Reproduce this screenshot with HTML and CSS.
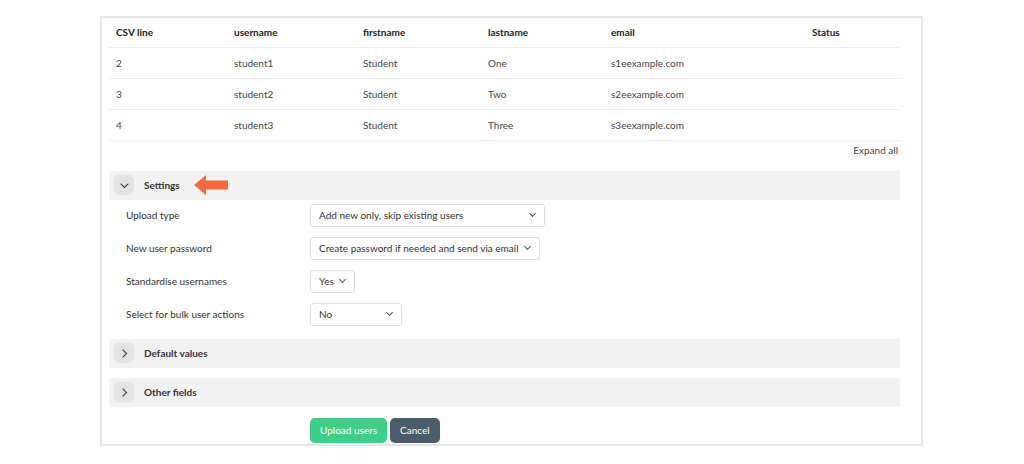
FILE: index.html
```html
<!DOCTYPE html>
<html lang="en">

<head>
  <meta charset="UTF-8">
  <title>Upload users - Preview</title>
  <meta name="viewport" content="width=device-width, initial-scale=1.0">
  <link rel="stylesheet" href="styles.css">
</head>

<body>

  <div class="frame">
    <table class="preview-table">
      <colgroup>
        <col style="width: 118px">
        <col style="width: 129px">
        <col style="width: 125px">
        <col style="width: 123px">
        <col style="width: 201px">
        <col>
      </colgroup>
      <thead>
        <tr>
          <th>CSV line</th>
          <th>username</th>
          <th>firstname</th>
          <th>lastname</th>
          <th>email</th>
          <th>Status</th>
        </tr>
      </thead>
      <tbody>
        <tr>
          <td>2</td>
          <td>student1</td>
          <td>Student</td>
          <td>One</td>
          <td>s1eexample.com</td>
          <td></td>
        </tr>
        <tr>
          <td>3</td>
          <td>student2</td>
          <td>Student</td>
          <td>Two</td>
          <td>s2eexample.com</td>
          <td></td>
        </tr>
        <tr>
          <td>4</td>
          <td>student3</td>
          <td>Student</td>
          <td>Three</td>
          <td>s3eexample.com</td>
          <td></td>
        </tr>
      </tbody>
    </table>

    <div class="expand-row"><a href="#">Expand all</a></div>

    <div class="section">
      <div class="section-head">
        <span class="toggle">
          <svg width="11" height="11" viewBox="0 0 10 10"><path d="M1.5 3.2 L5 6.7 L8.5 3.2" fill="none" stroke="#3a3a3a" stroke-width="1"/></svg>
        </span>
        <span class="section-title">Settings</span>
        <svg class="pointer" width="35" height="22" viewBox="0 0 35 22"><path d="M0 11 L12 1 L12 6.5 L34 6.5 L34 15.5 L12 15.5 L12 21 Z" fill="#f46a3c"/></svg>
      </div>
      <div class="section-body">
        <div class="form-row">
          <label>Upload type</label>
          <div class="select wide">Add new only, skip existing users<span class="caret"></span></div>
        </div>
        <div class="form-row">
          <label>New user password</label>
          <div class="select">Create password if needed and send via email<span class="caret"></span></div>
        </div>
        <div class="form-row">
          <label>Standardise usernames</label>
          <div class="select">Yes<span class="caret"></span></div>
        </div>
        <div class="form-row">
          <label>Select for bulk user actions</label>
          <div class="select narrow">No<span class="caret"></span></div>
        </div>
      </div>
    </div>

    <div class="section">
      <div class="section-head">
        <span class="toggle">
          <svg width="11" height="11" viewBox="0 0 10 10"><path d="M3.3 1.5 L6.8 5 L3.3 8.5" fill="none" stroke="#3a3a3a" stroke-width="1"/></svg>
        </span>
        <span class="section-title">Default values</span>
      </div>
    </div>

    <div class="section">
      <div class="section-head">
        <span class="toggle">
          <svg width="11" height="11" viewBox="0 0 10 10"><path d="M3.3 1.5 L6.8 5 L3.3 8.5" fill="none" stroke="#3a3a3a" stroke-width="1"/></svg>
        </span>
        <span class="section-title">Other fields</span>
      </div>
    </div>

    <div class="actions">
      <button class="btn btn-primary">Upload users</button>
      <button class="btn btn-secondary">Cancel</button>
    </div>
  </div>

</body>

</html>
```

FILE: styles.css
```css
* {
  box-sizing: border-box;
  margin: 0;
  padding: 0;
}

body {
  font-family: Lato, 'Open Sans', sans-serif;
  font-size: 10px;
  color: #333;
  background: white;
  padding: 16px 101px 0 100px;
}

.frame {
  width: 823px;
  height: 430px;
  border: 2px solid #e6e6e6;
  padding: 0 21px 0 7px;
}

.preview-table {
  width: 791px;
  border-collapse: collapse;
  table-layout: fixed;
}

.preview-table th,
.preview-table td {
  text-align: left;
  padding: 0 7px;
  border-bottom: 1px solid #ececec;
}

.preview-table th {
  height: 29px;
  font-weight: 700;
  color: #222;
}

.preview-table td {
  height: 31px;
  color: #444;
}

.expand-row {
  text-align: right;
  padding: 3px 2px 0 0;
  height: 30px;
}

.expand-row a {
  color: #444;
  text-decoration: none;
}

.section {
  margin-bottom: 10px;
}

.section-head {
  display: flex;
  align-items: center;
  height: 29px;
  background: #f2f2f2;
  padding-left: 5px;
}

.toggle {
  width: 20px;
  height: 20px;
  border-radius: 5px;
  background: #e3e3e3;
  display: flex;
  align-items: center;
  justify-content: center;
}

.section-title {
  margin-left: 10px;
  font-weight: 700;
  color: #333;
}

.pointer {
  margin-left: 14px;
}

.section-body {
  margin: -1px 0 -2px;
  padding-left: 17px;
}

.form-row {
  display: flex;
  align-items: center;
  height: 33px;
}

.form-row label {
  width: 184px;
  color: #333;
}

.select {
  display: flex;
  align-items: center;
  height: 23px;
  padding: 0 7px 0 8px;
  border: 1px solid #dedede;
  border-radius: 3px;
  color: #333;
}

.select.wide {
  width: 235px;
  justify-content: space-between;
}

.select.narrow {
  width: 92px;
  justify-content: space-between;
}

.caret {
  width: 5px;
  height: 5px;
  border-right: 1px solid #555;
  border-bottom: 1px solid #555;
  transform: rotate(45deg);
  margin: -3px 2px 0 6px;
}

.actions {
  display: flex;
  gap: 3px;
  padding: 1px 0 0 201px;
}

.btn {
  height: 25px;
  padding: 0 10px;
  border: none;
  border-radius: 5px;
  font-family: inherit;
  font-size: 10px;
  color: white;
  cursor: pointer;
}

.btn-primary {
  background: #3ccf87;
}

.btn-secondary {
  background: #4b5c6b;
}
```
